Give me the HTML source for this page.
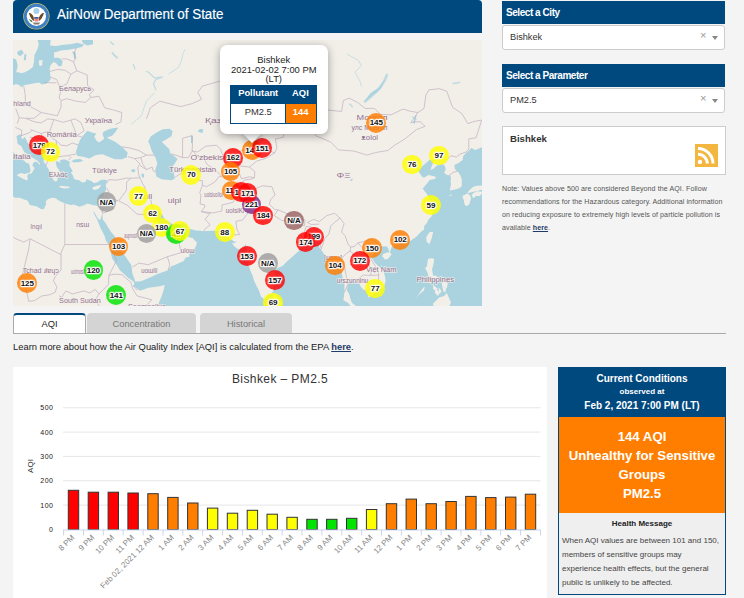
<!DOCTYPE html>
<html><head><meta charset="utf-8">
<style>
*{margin:0;padding:0;box-sizing:border-box}
html,body{width:744px;height:598px;overflow:hidden;background:#f4f4f4;font-family:"Liberation Sans",sans-serif;position:relative}
.abs{position:absolute}
#hdr{left:13px;top:0;width:469px;height:33px;background:#00497f;border-radius:4px 4px 0 0}
#hdr .t{position:absolute;left:44px;top:5.8px;color:#fff;font-size:14px;transform:scaleX(0.955);transform-origin:0 0;-webkit-text-stroke:0.15px #fff}
#map{left:13px;top:40px;width:469px;height:266px;background:#f2efe9;overflow:hidden}
.sh{left:502px;width:223px;height:23px;background:#00497f;color:#fff;font-size:10px;font-weight:bold;padding:6px 0 0 4px;letter-spacing:-0.45px}
.sel{left:502px;width:223px;height:25px;background:#fff;border:1px solid #ccc;border-radius:3px;font-size:9.2px;color:#333;padding:6px 0 0 7px}
.sel .x{position:absolute;left:197px;top:3px;color:#999;font-size:11px}
.sel .ar{position:absolute;left:209px;top:10px;width:0;height:0;border-left:3.5px solid transparent;border-right:3.5px solid transparent;border-top:4px solid #888}
#city{left:502px;top:126px;width:224px;height:49px;background:#fff;border:1px solid #ccc}
#note{left:502px;top:183px;width:224px;font-size:7.1px;line-height:13px;color:#555;letter-spacing:0.08px}
.tab{top:313px;height:20px;font-size:9.3px;color:#777;text-align:center;padding-top:6px;background:#d4d4d4;border-radius:4px 4px 0 0}
#tabline{left:13px;top:333px;width:713px;height:1px;background:#aaa}
#learn{left:13px;top:341px;font-size:9.4px;color:#222}
#chart{left:13px;top:367px;width:534px;height:231px;background:#fff}
#cc{left:558px;top:367px;width:168px;height:228px;border:1px solid #00497f;background:#efefef}
#cch{left:0;top:0;width:166px;height:49px;background:#00497f;color:#fff;text-align:center;font-weight:bold}
#cco{left:0;top:49px;width:166px;height:96px;background:#ff7e00;color:#fff;text-align:center;font-weight:bold;font-size:13.2px;line-height:19px;padding-top:10px}
#hm{left:0;top:151px;width:166px;text-align:center;font-weight:bold;font-size:8px;color:#222}
#hmt{left:3px;top:166px;width:160px;font-size:8px;line-height:14px;color:#444}
svg text{font-family:"Liberation Sans",sans-serif}
.yl{font-size:7px;fill:#222;letter-spacing:0.5px}
.xl{font-size:8px;fill:#888}
.al{font-size:8px;fill:#333}
.ct{font-size:12px;fill:#333}
.mk{position:absolute;width:19.8px;height:19.8px;border-radius:50%;text-align:center}
.mk i{font-style:normal;display:inline-block;text-shadow:1px 0 1px #fff,-1px 0 1px #fff,0 1px 1px #fff,0 -1px 1px #fff,1px 1px 1px #fff,-1px -1px 1px #fff,1px -1px 1px #fff,-1px 1px 1px #fff,0 0 3px #fff;padding:0 0.5px;line-height:8.5px}
.mk span{position:absolute;left:0;right:0;top:5.5px;font-size:8px;font-weight:bold;color:#111;line-height:9px;letter-spacing:-0.1px}
#pop{left:207px;top:5px;width:107.5px;height:89px;background:#fff;border-radius:7px;box-shadow:0 2px 8px rgba(0,0,0,0.35)}
#tip{left:232px;top:86px;width:14px;height:14px;background:#fff;transform:rotate(45deg);box-shadow:2px 2px 6px rgba(0,0,0,0.25)}
#pt{left:0;top:10px;width:107.5px;text-align:center;font-size:9.4px;line-height:9.7px;color:#222}
#ptab{left:10.2px;top:40px;width:87px;height:38.7px;border:1px solid #00497f;background:#fff}

</style></head><body>
<div id="hdr" class="abs"><svg class="abs" style="left:10px;top:2px" width="28" height="28" viewBox="0 0 28 28">
<circle cx="13.4" cy="14.3" r="13.2" fill="#c9c46a"/>
<circle cx="13.4" cy="14.3" r="12.5" fill="#3f7fc4"/>
<circle cx="13.4" cy="14.3" r="9.6" fill="#fff"/>
<circle cx="13.4" cy="9" r="3" fill="#a9d1e6"/>
<path d="M5.8,11 C7.5,10.5 9.5,12 10.8,15.5 L11,19 C9,18 7,15 5.8,11Z" fill="#6b4a22"/>
<path d="M21,11 C19.3,10.5 17.3,12 16,15.5 L15.8,19 C17.8,18 19.8,15 21,11Z" fill="#6b4a22"/>
<rect x="11.3" y="15" width="4.2" height="4.6" rx="1" fill="#e9828a"/>
<rect x="11.3" y="15" width="4.2" height="1.6" fill="#3a5fa8"/>
<path d="M6,17 C6.5,19 8,20 9.5,20.5 L9,18.5Z" fill="#3f8a4a"/>
<path d="M10,20.5 L17,20.5 L16,22.5 L11,22.5Z" fill="#8a7c6a"/>
</svg><div class="t">AirNow Department of State</div></div>
<div id="map" class="abs"><svg width="469" height="266" style="position:absolute;left:0;top:0">
<g fill="#aad3df"><path d="M59.0,11.7L62.4,11.7L63.2,18.2L61.3,18.9L60.5,14.6Z"/><path d="M3.5,96.2L4.3,101.0L4.6,103.7L8.4,106.3L11.1,112.0L14.5,114.6L18.3,114.6L17.2,116.6L21.0,118.6L24.8,121.1L27.1,123.6L26.7,125.1L24.8,122.6L22.1,121.6L19.8,123.6L19.5,126.1L21.7,128.1L19.8,131.5L17.6,133.9L16.0,133.9L16.4,132.7L17.6,130.5L16.8,126.6L16.0,123.6L13.4,123.1L11.5,121.1L10.0,120.1L8.4,117.9L4.6,116.6L3.1,115.1L0.1,112.0L-5.2,111.5L-5.2,143.4L-1.1,141.1L-3.3,143.4L-1.1,147.2L-2.6,150.4L-3.7,154.1L-1.1,155.9L2.4,157.7L6.9,157.7L11.1,159.5L14.5,160.4L16.8,164.9L23.3,166.2L27.8,168.9L30.9,169.3L33.2,164.0L32.8,161.3L35.1,159.1L39.2,157.7L42.7,158.2L44.9,160.0L48.0,161.8L52.2,163.6L57.5,164.9L60.9,164.5L66.6,166.7L70.4,165.4L74.6,163.6L79.5,164.9L84.1,165.8L86.7,164.9L89.0,161.3L89.8,158.2L91.7,153.2L93.2,148.6L92.8,144.4L93.6,142.0L94.3,140.6L92.4,139.7L88.3,139.7L84.1,142.5L80.7,143.0L78.4,141.1L73.4,139.2L72.7,142.0L69.3,142.5L65.8,140.1L63.9,140.1L60.9,138.7L60.1,135.8L57.9,132.5L59.8,131.5L58.6,129.1L56.7,126.6L56.3,124.1L57.1,122.6L55.6,121.1L51.8,119.6L49.5,119.6L46.8,120.6L47.6,123.1L43.8,121.1L42.7,122.6L43.8,127.1L45.3,129.1L48.0,133.0L46.8,134.4L44.2,134.4L44.9,136.8L44.2,141.1L42.3,141.6L40.0,139.7L38.9,135.8L38.1,133.9L39.6,132.5L36.6,131.5L35.4,129.1L33.5,126.1L32.4,124.1L30.5,122.1L30.9,117.6L30.9,115.1L28.6,113.0L27.1,111.5L24.8,109.9L22.1,107.9L19.1,106.3L17.2,105.2L14.5,102.6L13.0,98.9L11.5,96.7L9.6,99.4L8.1,97.3L9.2,95.1L6.2,94.6Z"/><path d="M58.2,121.6L61.3,119.6L67.0,119.1L70.4,120.6L67.0,122.1L61.3,122.6Z"/><path d="M80.5,170.9L80.7,172.9L82.2,175.9L84.5,180.2L85.6,183.2L87.1,187.0L91.7,196.3L92.8,200.4L97.0,206.6L98.1,214.3L99.3,218.7L103.5,224.7L106.9,230.3L110.7,233.8L115.3,238.1L119.1,240.5L121.3,242.4L121.0,244.7L119.4,246.3L122.1,247.1L125.9,250.2L127.8,250.5L135.4,247.8L141.1,247.1L146.8,246.3L151.7,244.9L150.6,250.2L148.7,255.9L146.8,260.6L144.1,267.5L143.0,290.3L336.9,290.3L337.2,265.5L335.3,262.9L330.4,260.2L331.5,252.1L331.5,244.3L330.0,238.5L328.5,232.6L327.7,226.7L325.4,225.1L322.4,226.7L319.7,229.5L317.8,229.5L315.2,228.7L315.6,222.7L315.2,218.3L312.9,215.9L310.2,212.7L308.0,209.8L306.4,207.8L305.7,203.3L304.5,202.1L301.1,202.5L298.8,204.5L295.0,205.4L291.2,205.8L287.4,206.6L285.9,211.1L282.9,213.5L276.8,219.1L273.4,221.9L269.6,225.9L264.6,227.9L261.6,230.3L261.6,234.6L262.0,240.1L260.4,246.3L260.1,250.9L258.2,254.8L254.7,254.8L253.6,256.7L251.3,259.4L247.9,256.3L246.8,252.9L245.6,249.8L243.7,246.3L241.1,240.8L239.2,234.6L237.3,230.6L236.1,226.7L235.0,222.7L233.5,216.7L233.8,211.5L233.5,207.8L232.7,203.7L230.8,207.4L226.6,209.8L224.0,208.6L221.3,206.2L219.0,203.3L218.6,203.3L221.3,202.9L224.3,200.8L222.8,202.5L217.9,199.2L216.0,197.9L213.3,196.3L211.4,192.9L210.3,190.4L203.8,190.8L198.1,190.8L190.9,191.3L187.1,190.8L182.9,190.4L179.1,189.6L174.5,188.7L173.4,184.5L170.7,182.8L165.8,184.9L162.0,185.3L158.2,183.6L154.4,181.1L151.7,179.4L149.8,175.5L147.6,172.9L145.3,170.7L143.0,169.3L141.1,170.7L139.2,171.1L139.2,175.0L141.1,178.1L143.0,181.5L145.3,184.1L147.2,187.0L148.7,190.0L149.7,192.9L149.8,190.0L151.4,187.5L152.5,187.5L152.9,190.8L151.7,193.8L152.9,195.0L154.4,196.3L160.1,195.9L163.5,194.2L167.3,190.8L169.6,188.7L170.0,187.5L171.1,186.2L170.7,189.6L171.1,192.9L175.3,197.1L179.5,197.9L181.8,200.4L184.0,202.5L182.9,206.6L179.5,211.1L176.4,211.5L176.4,216.7L172.6,217.5L170.7,221.1L166.9,222.7L162.4,224.7L158.2,226.3L155.2,230.3L148.7,232.6L143.4,234.6L139.2,236.5L133.5,238.9L127.8,241.2L125.9,241.6L122.1,241.6L121.3,238.5L119.4,233.4L118.7,227.9L118.3,225.1L114.5,219.5L110.7,213.9L108.0,210.2L105.7,206.6L104.2,202.1L101.6,195.9L98.1,192.1L95.5,187.9L92.4,182.8L89.8,179.4L89.4,172.9L88.3,176.8L87.1,180.2L84.5,178.1L81.8,172.9Z"/><path d="M342.6,290.3L342.6,265.5L339.1,262.9L338.0,260.6L337.2,257.9L336.5,254.8L333.8,250.2L334.9,245.1L336.5,241.6L336.9,239.3L338.8,238.5L340.3,238.9L340.3,241.6L343.7,242.0L346.4,244.3L348.3,247.5L350.5,249.8L353.6,250.5L355.1,254.0L355.1,257.5L357.8,255.9L360.8,254.0L363.8,250.9L367.3,249.0L370.7,247.1L371.8,244.3L372.6,240.8L372.2,237.3L370.7,231.8L368.4,228.7L365.4,226.3L361.9,222.7L359.7,219.5L358.5,217.9L358.9,215.5L360.8,212.7L362.3,209.4L365.4,206.6L368.0,206.2L371.1,206.6L373.7,206.2L375.6,209.0L376.0,211.9L377.1,211.5L378.7,207.0L382.5,205.4L386.3,204.5L388.5,202.5L390.8,203.3L393.9,201.7L397.7,200.8L400.3,198.8L403.4,196.7L405.6,194.2L407.9,192.1L411.0,189.6L411.3,185.8L413.6,183.6L415.5,179.4L418.6,176.3L420.1,171.5L416.7,168.5L420.1,166.7L420.1,164.5L417.8,161.8L416.3,159.1L414.0,154.1L411.0,150.4L409.8,148.6L414.0,143.4L416.7,140.1L422.4,138.7L422.8,136.8L418.6,135.8L415.5,134.9L411.0,137.8L408.7,136.3L407.2,133.9L404.1,129.1L407.2,128.1L411.3,124.6L414.8,121.6L416.7,119.6L421.2,120.6L418.6,126.6L417.4,130.0L420.1,129.1L423.9,125.6L429.6,124.1L431.9,126.1L432.6,129.6L431.1,133.0L434.2,134.9L437.2,135.4L438.0,137.8L437.6,141.1L438.0,144.4L437.2,148.1L436.8,150.4L439.5,150.0L442.1,149.5L445.6,148.6L447.5,147.6L449.0,145.3L448.6,142.5L449.0,139.7L447.5,135.8L445.2,132.0L441.8,129.1L441.4,125.1L445.6,123.1L449.7,120.1L450.1,116.1L453.5,112.5L455.4,111.0L458.5,107.9L462.3,109.9L469.1,107.3L488.9,107.3L488.9,290.3Z"/><path d="M350.9,61.2L354.0,59.9L359.3,55.0L363.5,52.5L368.0,48.7L371.1,42.2L373.0,35.6L374.5,33.6L373.3,33.6L371.8,38.9L369.5,43.5L365.7,48.0L361.2,50.6L357.0,53.7L352.8,59.3Z"/><path d="M235.7,91.8L237.6,88.5L241.1,87.9L244.1,89.6L250.2,90.2L257.8,89.6L257.0,92.4L249.4,91.8L244.1,91.3L239.9,90.7L238.0,92.9Z"/><path d="M246.4,111.5L249.4,110.5L255.1,111.0L254.4,113.0L249.4,112.5Z"/><path d="M184.8,91.8L186.7,89.1L190.5,89.6L189.4,92.9Z"/><path d="M178.0,95.6L179.9,96.2L179.5,102.6L178.0,103.7Z"/><path d="M117.5,131.0L119.8,129.1L122.5,130.0L121.3,132.5Z"/><path d="M128.2,133.4L131.2,133.9L130.8,137.8L128.9,137.3Z"/><path d="M350.2,239.3L354.0,241.6L352.1,243.2L349.4,240.8Z"/><path d="M336.9,140.6L339.1,138.2L339.9,140.1L337.6,141.1Z"/><path d="M401.5,84.6L403.7,74.9L402.6,74.9L400.3,82.3Z"/></g>
<g fill="#aad3df"><path d="M74.5,90.8L78.7,92.5L83.3,93.4L81.2,96.7L83.7,100.9L86.2,102.5L91.2,98.8L90.8,97.5L89.6,94.2L90.4,91.7L95.4,89.6L99.6,88.3L105.4,87.5L102.1,92.5L98.8,95.9L93.7,97.5L95.4,98.4L102.1,101.7L108.8,106.7L114.6,112.6L113.8,117.6L108.8,119.3L102.1,119.3L95.4,116.7L89.6,114.2L82.9,115.1L76.2,118.4L70.4,116.7L64.5,115.9L62.8,112.6L65.3,104.2L67.0,100.0L71.2,94.2Z"/><path d="M135.2,101.2L137.9,96.3L144.4,92.0L149.8,89.2L156.3,88.7L159.6,90.9L158.5,96.3L150.9,100.7L148.7,101.7L152.0,105.0L156.3,109.3L157.4,113.7L159.6,114.8L164.5,119.1L161.8,123.5L158.5,127.8L160.7,132.2L161.8,138.7L158.5,140.3L148.7,139.2L143.3,136.5L142.2,130.0L144.4,123.5L142.2,117.0L139.0,111.5L136.8,105.0Z"/><path d="M24.2,0.0L37.6,0.0L37.1,5.4L43.0,5.9L50.5,4.8L57.0,4.3L64.5,2.7L71.0,4.8L68.8,7.0L62.4,8.6L55.9,9.7L49.5,10.2L45.2,11.3L42.5,14.0L40.9,17.7L44.1,17.2L47.8,18.8L49.7,21.5L48.4,26.3L45.7,26.3L43.0,23.1L40.3,22.0L37.6,25.3L36.6,29.0L37.1,33.3L37.6,39.8L33.3,43.5L29.0,44.6L25.8,42.5L10.8,45.2L8.6,47.3L6.5,45.2L3.2,44.1L0.0,45.2L-2.2,45.2L-2.2,18.3L0.0,18.3L3.2,19.4L4.8,25.8L3.2,32.3L5.4,32.3L8.6,33.3L11.8,32.3L16.1,30.1L19.9,26.9L21.0,21.5L21.5,15.1L24.7,8.6L25.8,4.3L24.2,-2.2Z"/><path d="M4.3,11.8L8.6,9.7L10.8,12.9L7.5,16.1L4.8,15.1Z"/><path d="M11.3,14.5L13.4,14.0L12.9,20.4L10.8,19.9Z"/><path d="M68.8,0.0L80.0,0.0L80.0,4.3L74.2,5.4L69.9,3.2Z"/></g>
<g fill="#f2efe9"><path d="M3.9,134.9L7.7,133.0L11.9,133.9L16.0,132.5L14.1,136.3L14.9,138.7L14.1,140.4L11.1,139.2L8.1,137.8L4.6,135.8Z"/><path d="M46.1,146.7L48.0,145.8L51.8,146.3L56.7,146.7L56.3,148.1L51.0,148.6L46.5,147.2Z"/><path d="M79.5,149.0L81.8,150.0L86.0,148.6L88.3,144.8L82.2,146.3L79.5,147.6Z"/><path d="M416.7,192.1L420.1,192.1L418.6,198.4L416.3,204.5L413.6,201.2L413.3,197.1L415.5,193.8Z"/><path d="M369.5,216.3L371.8,219.5L374.9,219.1L378.7,214.3L376.8,212.3L373.0,212.7L369.9,214.3Z"/><path d="M415.2,218.7L418.6,218.3L421.2,218.7L420.5,223.9L419.0,229.5L420.1,235.8L423.1,235.8L428.1,240.5L428.8,242.0L425.4,240.5L422.4,238.9L418.6,237.3L415.2,235.8L414.8,233.0L412.1,227.9L414.0,226.3L414.4,222.3Z"/><path d="M414.0,238.5L419.0,240.5L417.8,243.6L414.8,242.0Z"/><path d="M402.2,258.3L404.5,255.9L411.0,250.2L411.7,246.7L410.2,247.8L405.3,254.8Z"/><path d="M420.1,244.7L425.0,249.0L422.0,250.5L420.1,249.0Z"/><path d="M422.0,248.2L426.6,252.1L425.0,255.9L422.0,252.9Z"/><path d="M425.4,247.1L428.5,250.9L426.6,254.4L425.8,250.2Z"/><path d="M428.8,242.0L434.9,242.8L433.8,248.2L431.5,247.5L429.2,245.9Z"/><path d="M429.2,245.9L433.0,248.2L432.6,252.5L430.4,251.3Z"/><path d="M420.1,263.6L426.2,257.5L431.1,255.9L433.8,252.9L438.0,262.5L435.7,267.5L420.5,267.5Z"/><path d="M449.4,155.9L452.4,154.6L454.3,153.2L457.0,155.5L458.1,158.2L456.2,164.5L453.5,166.2L451.6,164.5L450.9,160.4L450.1,158.6Z"/><path d="M454.3,152.7L456.6,150.0L460.4,146.7L464.2,145.8L469.9,145.3L469.9,149.5L464.2,150.9L460.4,151.8L455.4,153.0Z"/><path d="M458.5,155.0L460.8,152.7L464.2,151.3L469.9,151.8L468.7,153.6L466.8,155.9L463.0,155.9L460.4,158.2Z"/><path d="M260.4,252.9L262.0,254.0L265.4,257.9L268.1,262.5L268.4,267.5L260.1,267.5L260.1,261.7L260.1,257.9Z"/><path d="M436.4,155.9L439.1,155.5L438.7,154.8L436.8,155.0Z"/><path d="M25.8,20.4L29.6,19.9L29.0,25.8L26.3,25.8Z"/><path d="M40.9,12.4L44.6,11.8L45.2,17.2L41.4,17.7Z"/></g>
<g fill="none" stroke="#aad3df" stroke-linecap="round" stroke-linejoin="round" opacity="0.7"><path stroke-width="1.2" d="M133.2,31.5L135.6,32.3L141.3,37.9L149.4,37.1L142.9,39.5L140.5,43.5L142.9,50.0"/><path stroke-width="0.8" d="M141.3,53.2L133.2,61.3L128.4,75.8L118.7,83.9"/><path stroke-width="0.8" d="M155.8,33.9L165.5,27.4L167.9,21.8L170.3,12.9L171.9,9.7"/><path stroke-width="1.8" d="M99.4,12.9L101.0,15.0L104.2,17.7"/><path stroke-width="1.2" d="M120.3,24.2L122.0,29.0"/><path stroke-width="1.6" d="M97.7,2.0L100.5,4.5"/><path stroke-width="0.8" d="M334.2,14.3L345.7,20.6L348.3,25.8L341.9,32.1L347.0,41.1L348.3,46.2"/><path stroke-width="1.5" d="M336.8,64.0L339.3,66.6"/><path stroke-width="1.5" d="M440.2,43.6L446.6,42.4"/><path stroke-width="1.2" d="M399.4,76.8L403.2,79.4"/><path stroke-width="2.6" d="M352.1,61.5L358.0,56.5L363.6,51.3L368.0,46.0L371.3,41.1L373.8,35.5"/></g>
<g fill="none" stroke="#b9a3b9" stroke-width="0.8" stroke-linejoin="round" opacity="0.75"><path d="M133.5,78.9L137.3,67.8L146.8,61.2L167.7,66.6L179.1,63.6L188.6,59.3L184.8,52.5L189.4,46.1L205.7,41.5L219.0,36.9L236.1,45.5L247.5,45.5L253.2,55.0L260.8,64.2L272.2,64.8L281.7,72.5L288.6,75.4"/><path d="M158.2,113.6L169.6,117.6L169.6,98.3L179.1,95.6L179.5,103.7L179.1,111.0L184.8,112.0L192.4,106.3L203.4,105.2L207.6,109.4L209.5,114.6L215.2,120.1L219.0,117.1L224.7,112.5L230.0,109.9L236.1,111.5L239.9,107.9L245.6,108.9L255.1,109.9L261.6,113.0L263.9,107.9L262.4,98.9L270.3,97.3L272.2,86.3L281.7,87.4L283.6,78.9L288.6,75.4"/><path d="M169.6,117.6L175.3,117.6L179.5,110.5L184.8,116.6L190.5,118.1L194.3,124.6L201.9,129.6L209.5,136.8"/><path d="M162.0,137.3L166.9,133.9L174.2,133.0L181.0,136.3L186.7,140.6L189.4,140.6L189.4,145.3L186.7,152.7L187.9,155.0L187.1,164.0L191.7,164.9L191.7,167.1L188.2,171.5L194.3,173.3L197.4,172.9L192.0,179.4L195.5,182.8L197.0,184.9L191.7,189.2L190.9,191.3"/><path d="M189.4,145.3L193.6,146.7L201.9,142.0L206.1,136.3L214.5,137.8L217.1,137.8L222.8,135.8L226.6,133.9L228.5,138.7L236.5,136.8L241.4,137.8"/><path d="M188.2,171.5L200.0,172.9L208.8,171.1L209.1,164.9L215.2,163.6L220.2,162.2L224.0,155.9L222.4,152.7L227.4,150.9L228.5,146.7L227.4,143.4L232.3,139.7L238.0,139.2L241.4,137.8"/><path d="M214.5,137.8L216.7,133.0L213.3,128.1L217.1,126.6L222.8,123.1L224.7,119.1"/><path d="M220.9,126.1L228.5,126.1L236.5,127.1L241.8,131.5L241.4,137.8"/><path d="M236.5,127.1L243.7,121.1L248.7,119.6L253.2,118.1L261.6,113.0"/><path d="M216.0,197.9L218.3,195.0L226.6,194.6L224.0,189.2L222.8,181.5L230.0,179.8L236.1,171.1L239.9,165.8L241.8,159.5L239.9,158.2L237.3,151.8L243.7,148.1L249.4,145.8L258.9,146.7L262.0,155.0L257.8,159.5L256.3,164.0L262.0,169.8L265.0,169.8"/><path d="M261.2,175.5L265.0,169.8L272.2,172.9L279.8,176.3L285.5,179.4L292.0,179.8L291.6,185.8L283.6,185.3L276.0,181.9L268.4,180.2L261.2,175.5"/><path d="M294.3,182.4L300.7,179.4L306.4,181.5L314.0,175.5L321.6,173.3L327.0,178.1"/><path d="M294.3,182.4L298.1,184.5L306.4,184.1"/><path d="M291.6,204.5L293.9,195.0L291.2,192.1L293.1,186.6L298.1,187.0L306.4,192.1L307.2,196.3L305.7,200.4L308.3,208.6L307.6,209.8"/><path d="M308.3,208.6L311.8,198.4L315.9,194.2L317.8,185.8L321.6,182.4L327.0,178.1"/><path d="M327.0,178.1L331.1,183.6L328.5,192.1L332.3,195.9L334.9,204.1L337.6,207.0L341.4,206.6L344.8,202.9L350.2,201.7L357.0,199.2L362.3,201.2L367.3,206.6"/><path d="M337.6,207.0L337.2,211.1L332.7,213.9L328.5,218.7L331.5,227.1L333.0,234.6L334.9,244.3L331.5,252.1"/><path d="M337.2,211.1L341.4,214.7L340.7,220.7L346.7,221.1L354.7,223.1L358.1,229.5L357.8,235.4"/><path d="M344.8,202.9L350.2,208.6L354.0,213.1L357.8,219.1L362.7,226.7L365.4,232.6L365.7,235.0"/><path d="M346.4,244.3L346.0,238.5L350.2,235.0L357.8,235.4L365.7,235.0L365.4,243.2L359.7,248.2L354.0,250.5"/><path d="M290.5,74.9L302.6,95.6L317.8,102.1L325.4,109.9L340.7,111.0L354.0,115.1L362.7,112.5L374.9,110.5L381.7,105.2L392.0,98.9L403.4,89.6L412.1,86.3L407.2,81.8L401.5,81.8L397.7,82.9L404.9,72.5"/><path d="M290.5,74.9L298.8,68.4L308.3,66.0L315.9,70.2L328.5,71.4L330.4,60.5L336.1,58.1L344.5,62.4L352.1,68.4L361.6,68.4L367.3,74.3L377.9,74.9L390.1,69.0L397.7,71.4L404.9,72.5"/><path d="M404.9,72.5L411.0,68.4L412.9,55.0L415.9,49.9L426.2,48.7L433.8,51.2L439.5,67.2L449.0,73.7L454.7,83.5L462.3,81.2L468.7,80.1L463.0,97.8L455.8,98.9L455.8,108.9L453.2,112.0"/><path d="M453.2,112.0L447.1,114.1L443.3,117.1L438.0,115.6L431.9,121.6L429.6,124.1"/><path d="M436.1,135.4L439.9,132.5L444.8,131.0"/><path d="M62.4,-0.4L67.0,-5.8L70.8,-12.2"/><path d="M49.1,18.9L53.7,18.9L60.5,21.8L62.4,18.9L61.3,12.4L63.2,8.0"/><path d="M36.6,31.5L44.2,29.5L51.8,30.1L57.9,34.2"/><path d="M60.5,21.8L63.9,30.8L57.9,34.2L55.6,39.6L53.7,44.2L48.0,46.1L46.1,45.5"/><path d="M37.0,36.9L43.8,39.6L46.1,45.5"/><path d="M31.2,42.5L43.4,42.9"/><path d="M46.1,45.5L47.6,51.8L46.1,58.1L48.0,60.5L48.0,67.2L44.2,76.0L42.3,75.4"/><path d="M63.9,30.8L74.2,34.9L74.6,45.5L81.0,49.9L76.5,54.4L77.6,57.5"/><path d="M48.0,60.5L53.7,58.7L63.2,61.2L72.7,62.4L77.6,57.5L86.0,56.2L91.7,67.8L101.2,70.2L108.8,72.5L108.0,81.8L102.3,84.6"/><path d="M10.7,46.1L12.2,54.4L12.6,64.2L19.5,67.8L28.2,72.5L42.3,75.4"/><path d="M21.4,81.8L28.2,82.9L34.7,78.9L40.8,79.5"/><path d="M4.3,83.5L6.2,77.8L12.6,78.3L21.4,81.8"/><path d="M2.7,68.4L6.2,77.8"/><path d="M12.6,78.3L21.0,78.3L28.2,72.5"/><path d="M40.8,79.5L36.6,91.8L33.9,91.8"/><path d="M17.6,89.6L28.2,93.5L33.9,91.8"/><path d="M40.8,79.5L49.9,82.3L57.9,80.1L62.0,78.9L67.7,82.3L71.2,90.7L63.9,95.6L69.6,97.3"/><path d="M57.9,80.1L63.9,95.6"/><path d="M33.9,91.8L38.1,97.3L43.0,100.5L48.0,105.2L53.7,105.8L59.4,103.1L65.5,105.0"/><path d="M43.0,100.5L44.2,107.9L41.9,112.5L44.2,117.1L49.9,116.1L56.0,115.6L57.9,117.6L55.6,120.1"/><path d="M56.3,115.1L63.2,114.1"/><path d="M32.8,125.6L35.4,119.6L40.4,118.1L44.2,117.1"/><path d="M30.5,114.6L33.2,111.0L35.1,114.6L35.4,119.6"/><path d="M16.8,97.3L23.3,97.8L29.0,98.9L30.9,106.3L27.1,111.5"/><path d="M19.5,106.3L23.6,109.4L27.1,111.5"/><path d="M28.2,93.5L29.0,98.9"/><path d="M33.2,111.0L38.5,112.5L41.9,112.5"/><path d="M8.4,95.6L16.0,92.9L19.5,90.2"/><path d="M2.4,87.4L8.8,90.2L8.4,95.6"/><path d="M114.9,116.6L121.7,118.6L127.0,124.1L124.8,127.1L125.5,133.9L127.0,137.8L117.9,138.2L112.6,138.2L104.2,140.1L95.9,139.7L93.6,143.4"/><path d="M108.8,106.8L116.4,107.9L125.9,110.5L133.5,115.1L141.5,115.1"/><path d="M121.7,118.6L127.8,117.6L133.5,115.1"/><path d="M127.8,117.6L129.7,124.1L133.5,129.6L139.2,127.1L140.3,131.0L142.6,132.0"/><path d="M127.0,125.6L133.5,129.6"/><path d="M127.0,137.8L129.7,143.9L132.4,148.1L130.8,152.7L137.3,157.7L139.2,166.7L141.1,170.7"/><path d="M117.9,138.2L113.7,142.0L113.4,150.4L105.7,160.9L114.5,165.4L124.0,174.2L133.5,174.6L139.2,175.0"/><path d="M133.5,174.6L140.7,177.2"/><path d="M92.8,158.6L105.0,160.4"/><path d="M105.0,160.4L97.4,164.0L101.2,168.5L95.5,171.1L89.6,173.5"/><path d="M89.4,172.9L91.7,166.2L92.1,157.3L95.9,151.8L93.6,148.1"/><path d="M86.7,164.9L89.4,172.9"/><path d="M119.4,227.1L125.9,223.1L135.4,224.7L154.4,216.7L168.1,212.7L165.8,201.7L156.7,200.8L152.9,195.0"/><path d="M155.2,230.3L156.7,224.3L154.4,216.7"/><path d="M165.8,201.7L169.6,196.3L171.1,192.9"/><path d="M51.8,163.6L51.8,204.5L97.0,204.5"/><path d="M51.8,204.5L48.0,212.7L48.0,214.7L17.2,198.8L10.7,202.1L2.0,198.4L-5.2,192.1"/><path d="M48.0,214.7L48.0,229.9L42.3,236.5L40.4,240.8L43.8,246.7L42.3,252.1L36.6,254.8L29.0,255.9L21.4,260.6L15.7,261.3"/><path d="M15.7,261.3L13.8,252.5L11.9,242.4L8.4,237.7L10.0,232.6L15.7,209.0L17.2,198.8"/><path d="M46.1,255.9L48.7,257.1L52.9,250.9L59.4,254.0L70.8,250.9L76.9,252.9L82.2,249.4L86.0,254.0"/><path d="M97.0,204.5L103.5,220.7L95.9,235.4L95.5,244.3L89.8,250.2L86.0,254.0"/><path d="M95.5,235.4L101.2,234.2L108.8,234.6L117.9,242.4"/><path d="M117.9,242.4L119.4,248.2L124.0,255.9L138.8,259.8L127.8,271.3"/><path d="M86.0,254.0L82.2,259.8L89.8,271.3"/><path d="M121.0,246.3L124.0,250.2"/></g>
<g font-family="Liberation Sans" font-size="7.4" fill="#927292" text-anchor="middle" stroke="#f2efe9" stroke-width="1.5" paint-order="stroke" stroke-opacity="0.8"><text x="62.1" y="51.1" textLength="32" lengthAdjust="spacingAndGlyphs">Беларусь</text><text x="85.5" y="82.9" textLength="27.4" lengthAdjust="spacingAndGlyphs">Україна</text><text x="9.1" y="66.4" textLength="17.5" lengthAdjust="spacingAndGlyphs">hland</text><text x="48.7" y="97.2" textLength="30" lengthAdjust="spacingAndGlyphs">România</text><text x="8.9" y="118.5" textLength="17.7" lengthAdjust="spacingAndGlyphs">Italia</text><text x="45.2" y="136.6" textLength="19" lengthAdjust="spacingAndGlyphs">Ελλάς</text><text x="91.5" y="132.5" textLength="25" lengthAdjust="spacingAndGlyphs">Türkiye</text><text x="200.0" y="120.4" textLength="45" lengthAdjust="spacingAndGlyphs">O'zbekiston</text><text x="179.7" y="132.2" textLength="47" lengthAdjust="spacingAndGlyphs">Türkmenistan</text><text x="200.6" y="157.2" textLength="18.5" lengthAdjust="spacingAndGlyphs">uolsiuollol</text><text x="161.5" y="163.2" textLength="13.7" lengthAdjust="spacingAndGlyphs">ulpl</text><text x="222.0" y="172.5" textLength="18.5" lengthAdjust="spacingAndGlyphs">uolsiKl</text><text x="131.3" y="158.5" textLength="16" lengthAdjust="spacingAndGlyphs">uloll</text><text x="117.7" y="198.1" textLength="13" lengthAdjust="spacingAndGlyphs">aupnosll</text><text x="69.8" y="187.0" textLength="13" lengthAdjust="spacingAndGlyphs">nsɯ</text><text x="23.3" y="188.6" textLength="11.4" lengthAdjust="spacingAndGlyphs">lnqıl</text><text x="27.7" y="233.1" textLength="36" lengthAdjust="spacingAndGlyphs">Tchad ɹlɐɥɔ</text><text x="65.0" y="234.3" textLength="14" lengthAdjust="spacingAndGlyphs">uolnosll</text><text x="67.0" y="262.8" textLength="41.8" lengthAdjust="spacingAndGlyphs">South Sudan</text><text x="174.6" y="213.2" textLength="13.7" lengthAdjust="spacingAndGlyphs">uloɯ</text><text x="136.3" y="232.9" textLength="16" lengthAdjust="spacingAndGlyphs">uoɯlll</text><text x="359.0" y="80.3" textLength="31" lengthAdjust="spacingAndGlyphs">Монгол</text><text x="356.6" y="90.3" textLength="36" lengthAdjust="spacingAndGlyphs">улс Монгол</text><text x="356.5" y="100.4" textLength="17" lengthAdjust="spacingAndGlyphs">ᴥolol</text><text x="330.5" y="138.2" textLength="14" lengthAdjust="spacingAndGlyphs">ΦΞ</text><text x="368.2" y="231.6" textLength="30.3" lengthAdjust="spacingAndGlyphs">Việt Nam</text><text x="339.6" y="243.3" textLength="31.5" lengthAdjust="spacingAndGlyphs">urszunnlnu</text><text x="422.3" y="242.0" textLength="37.6" lengthAdjust="spacingAndGlyphs">Philippines</text><text x="320.0" y="219.7" textLength="18" lengthAdjust="spacingAndGlyphs">[ɯɐuɯ]</text><text x="203.0" y="82.9" textLength="22" lengthAdjust="spacingAndGlyphs">Қаза</text><text x="134.0" y="269.2" textLength="38" lengthAdjust="spacingAndGlyphs">Soomaaliya</text></g>
</svg><div class="mk" style="left:16.3px;top:95.0px;background:rgba(255,0,0,0.82)"><span><i>179</i></span></div>
<div class="mk" style="left:27.5px;top:101.9px;background:rgba(255,255,0,0.82)"><span><i>72</i></span></div>
<div class="mk" style="left:168.4px;top:124.9px;background:rgba(255,255,0,0.82)"><span><i>70</i></span></div>
<div class="mk" style="left:229.0px;top:100.3px;background:rgba(255,126,0,0.82)"><span><i>144</i></span></div>
<div class="mk" style="left:239.2px;top:98.1px;background:rgba(255,0,0,0.82)"><span><i>151</i></span></div>
<div class="mk" style="left:210.1px;top:107.8px;background:rgba(255,0,0,0.82)"><span><i>162</i></span></div>
<div class="mk" style="left:207.7px;top:121.7px;background:rgba(255,126,0,0.82)"><span><i>105</i></span></div>
<div class="mk" style="left:208.6px;top:140.6px;background:rgba(255,126,0,0.82)"><span><i>111</i></span></div>
<div class="mk" style="left:218.1px;top:142.1px;background:rgba(255,0,0,0.82)"><span><i>171</i></span></div>
<div class="mk" style="left:228.7px;top:154.6px;background:rgba(127,42,130,0.82)"><span><i>221</i></span></div>
<div class="mk" style="left:224.7px;top:143.3px;background:rgba(255,0,0,0.82)"><span><i>171</i></span></div>
<div class="mk" style="left:240.3px;top:165.6px;background:rgba(255,0,0,0.82)"><span><i>184</i></span></div>
<div class="mk" style="left:353.4px;top:72.9px;background:rgba(255,126,0,0.82)"><span><i>145</i></span></div>
<div class="mk" style="left:389.2px;top:114.5px;background:rgba(255,255,0,0.82)"><span><i>76</i></span></div>
<div class="mk" style="left:416.0px;top:105.6px;background:rgba(255,255,0,0.82)"><span><i>97</i></span></div>
<div class="mk" style="left:408.0px;top:155.2px;background:rgba(255,255,0,0.82)"><span><i>59</i></span></div>
<div class="mk" style="left:83.7px;top:152.4px;background:rgba(158,158,158,0.82)"><span><i>N/A</i></span></div>
<div class="mk" style="left:115.5px;top:146.4px;background:rgba(255,255,0,0.82)"><span><i>77</i></span></div>
<div class="mk" style="left:129.7px;top:163.6px;background:rgba(255,255,0,0.82)"><span><i>62</i></span></div>
<div class="mk" style="left:138.6px;top:177.5px;background:rgba(255,255,0,0.82)"><span><i>180</i></span></div>
<div class="mk" style="left:123.6px;top:183.5px;background:rgba(158,158,158,0.82)"><span><i>N/A</i></span></div>
<div class="mk" style="left:153.1px;top:184.3px;background:rgba(0,228,0,0.82)"><span><i>49</i></span></div>
<div class="mk" style="left:157.1px;top:181.1px;background:rgba(255,255,0,0.82)"><span><i>67</i></span></div>
<div class="mk" style="left:95.7px;top:196.5px;background:rgba(255,126,0,0.82)"><span><i>103</i></span></div>
<div class="mk" style="left:201.8px;top:182.3px;background:rgba(255,255,0,0.82)"><span><i>88</i></span></div>
<div class="mk" style="left:271.0px;top:170.5px;background:rgba(154,100,100,0.82)"><span><i>N/A</i></span></div>
<div class="mk" style="left:290.8px;top:186.8px;background:rgba(255,0,0,0.82)"><span><i>199</i></span></div>
<div class="mk" style="left:282.7px;top:192.2px;background:rgba(255,0,0,0.82)"><span><i>174</i></span></div>
<div class="mk" style="left:223.9px;top:206.4px;background:rgba(255,0,0,0.82)"><span><i>153</i></span></div>
<div class="mk" style="left:244.8px;top:213.3px;background:rgba(158,158,158,0.82)"><span><i>N/A</i></span></div>
<div class="mk" style="left:252.0px;top:230.0px;background:rgba(255,0,0,0.82)"><span><i>157</i></span></div>
<div class="mk" style="left:250.1px;top:252.5px;background:rgba(255,255,0,0.82)"><span><i>69</i></span></div>
<div class="mk" style="left:377.3px;top:189.9px;background:rgba(255,126,0,0.82)"><span><i>102</i></span></div>
<div class="mk" style="left:349.1px;top:198.2px;background:rgba(255,126,0,0.82)"><span><i>150</i></span></div>
<div class="mk" style="left:336.8px;top:210.9px;background:rgba(255,0,0,0.82)"><span><i>172</i></span></div>
<div class="mk" style="left:312.1px;top:215.5px;background:rgba(255,126,0,0.82)"><span><i>104</i></span></div>
<div class="mk" style="left:352.3px;top:238.6px;background:rgba(255,255,0,0.82)"><span><i>77</i></span></div>
<div class="mk" style="left:70.5px;top:220.2px;background:rgba(0,228,0,0.82)"><span><i>120</i></span></div>
<div class="mk" style="left:4.4px;top:233.4px;background:rgba(255,126,0,0.82)"><span><i>125</i></span></div>
<div class="mk" style="left:93.4px;top:245.4px;background:rgba(0,228,0,0.82)"><span><i>141</i></span></div>
<div id="tip" class="abs"></div>
<div id="pop" class="abs"><div id="pt" class="abs">Bishkek<br>2021-02-02 7:00 PM<br>(LT)</div>
<div id="ptab" class="abs">
<div class="abs" style="left:0;top:0;width:85px;height:18px;background:#00497f"></div>
<div class="abs" style="left:0;top:1.2px;width:54px;text-align:center;color:#fff;font-weight:bold;font-size:9.4px">Pollutant</div>
<div class="abs" style="left:53.5px;top:1.2px;width:31.5px;text-align:center;color:#fff;font-weight:bold;font-size:9.4px">AQI</div>
<div class="abs" style="left:53.5px;top:18px;width:31.5px;height:18.7px;background:#ff7e00;border-left:1px solid #00497f"></div>
<div class="abs" style="left:0;top:20.2px;width:54px;text-align:center;color:#333;font-size:9.4px">PM2.5</div>
<div class="abs" style="left:54px;top:20.2px;width:31px;text-align:center;color:#fff;font-weight:bold;font-size:9.4px">144</div>
</div></div>
</div>

<div class="abs sh" style="top:1px">Select a City</div>
<div class="abs sel" style="top:25px">Bishkek<span class="x">×</span><span class="ar"></span></div>
<div class="abs sh" style="top:64px">Select a Parameter</div>
<div class="abs sel" style="top:88px">PM2.5<span class="x">×</span><span class="ar"></span></div>
<div id="city" class="abs"><div class="abs" style="left:7px;top:6px;font-size:9.6px;font-weight:bold;color:#333">Bishkek</div>
<svg class="abs" style="left:192px;top:17px" width="23" height="23" viewBox="0 0 23 23"><rect width="23" height="23" fill="#f3b63f"/><circle cx="4.9" cy="17.9" r="2.2" fill="#fff"/><path d="M3,10.3 A9.3,9.3 0 0 1 12.3,19.6" fill="none" stroke="#fff" stroke-width="3"/><path d="M3,4.6 A15,15 0 0 1 18,19.6" fill="none" stroke="#fff" stroke-width="3"/></svg></div>
<div id="note" class="abs">Note: Values above 500 are considered Beyond the AQI. Follow recommendations for the Hazardous category. Additional information on reducing exposure to extremely high levels of particle pollution is available <b><u style="color:#1f3b66">here</u></b>.</div>

<div class="abs tab" style="left:13px;width:73px;background:#fff;border:1px solid #aaa;border-top:2px solid #00497f;border-bottom:none;color:#222;padding-top:4px">AQI</div>
<div class="abs tab" style="left:87px;width:109px">Concentration</div>
<div class="abs tab" style="left:200px;width:92px">Historical</div>
<div id="tabline" class="abs"></div>
<div id="learn" class="abs">Learn more about how the Air Quality Index [AQI] is calculated from the EPA <b><u style="color:#1f3b66">here</u></b>.</div>
<div id="chart" class="abs"></div>
<div id="cc" class="abs">
 <div id="cch" class="abs"><div style="font-size:10px;padding-top:5px">Current Conditions</div><div style="font-size:8px;padding-top:3px;line-height:10px">observed at</div><div style="font-size:10px;padding-top:3px">Feb 2, 2021 7:00 PM (LT)</div></div>
 <div id="cco" class="abs">144 AQI<br>Unhealthy for Sensitive<br>Groups<br>PM2.5</div>
 <div id="hm" class="abs">Health Message</div>
 <div id="hmt" class="abs">When AQI values are between 101 and 150, members of sensitive groups may experience health effects, but the general public is unlikely to be affected.</div>
</div>
<svg class="abs" style="left:0;top:0" width="744" height="598"><line x1="63" x2="540.5" y1="505.1" y2="505.1" stroke="#e6e6e6" stroke-width="1"/>
<text x="53.5" y="507.8" text-anchor="end" class="yl">100</text>
<line x1="63" x2="540.5" y1="480.8" y2="480.8" stroke="#e6e6e6" stroke-width="1"/>
<text x="53.5" y="483.4" text-anchor="end" class="yl">200</text>
<line x1="63" x2="540.5" y1="456.4" y2="456.4" stroke="#e6e6e6" stroke-width="1"/>
<text x="53.5" y="459.1" text-anchor="end" class="yl">300</text>
<line x1="63" x2="540.5" y1="432.1" y2="432.1" stroke="#e6e6e6" stroke-width="1"/>
<text x="53.5" y="434.7" text-anchor="end" class="yl">400</text>
<line x1="63" x2="540.5" y1="407.8" y2="407.8" stroke="#e6e6e6" stroke-width="1"/>
<text x="53.5" y="410.4" text-anchor="end" class="yl">500</text>
<text x="53.5" y="532.1" text-anchor="end" class="yl">0</text>
<rect x="68.3" y="490.3" width="10.4" height="39.2" fill="#ff0000" stroke="#333" stroke-width="1"/>
<rect x="88.2" y="492.2" width="10.4" height="37.3" fill="#ff0000" stroke="#333" stroke-width="1"/>
<rect x="108.1" y="492.2" width="10.4" height="37.3" fill="#ff0000" stroke="#333" stroke-width="1"/>
<rect x="127.9" y="493.0" width="10.4" height="36.5" fill="#ff0000" stroke="#333" stroke-width="1"/>
<rect x="147.8" y="493.7" width="10.4" height="35.8" fill="#ff7e00" stroke="#333" stroke-width="1"/>
<rect x="167.7" y="497.4" width="10.4" height="32.1" fill="#ff7e00" stroke="#333" stroke-width="1"/>
<rect x="187.6" y="503.0" width="10.4" height="26.5" fill="#ff7e00" stroke="#333" stroke-width="1"/>
<rect x="207.4" y="508.1" width="10.4" height="21.4" fill="#ffff00" stroke="#333" stroke-width="1"/>
<rect x="227.3" y="513.2" width="10.4" height="16.3" fill="#ffff00" stroke="#333" stroke-width="1"/>
<rect x="247.2" y="510.3" width="10.4" height="19.2" fill="#ffff00" stroke="#333" stroke-width="1"/>
<rect x="267.0" y="514.2" width="10.4" height="15.3" fill="#ffff00" stroke="#333" stroke-width="1"/>
<rect x="286.9" y="517.3" width="10.4" height="12.2" fill="#ffff00" stroke="#333" stroke-width="1"/>
<rect x="306.8" y="519.3" width="10.4" height="10.2" fill="#00e400" stroke="#333" stroke-width="1"/>
<rect x="326.6" y="519.3" width="10.4" height="10.2" fill="#00e400" stroke="#333" stroke-width="1"/>
<rect x="346.5" y="518.3" width="10.4" height="11.2" fill="#00e400" stroke="#333" stroke-width="1"/>
<rect x="366.4" y="509.5" width="10.4" height="20.0" fill="#ffff00" stroke="#333" stroke-width="1"/>
<rect x="386.3" y="503.7" width="10.4" height="25.8" fill="#ff7e00" stroke="#333" stroke-width="1"/>
<rect x="406.1" y="499.1" width="10.4" height="30.4" fill="#ff7e00" stroke="#333" stroke-width="1"/>
<rect x="426.0" y="503.7" width="10.4" height="25.8" fill="#ff7e00" stroke="#333" stroke-width="1"/>
<rect x="445.9" y="501.5" width="10.4" height="28.0" fill="#ff7e00" stroke="#333" stroke-width="1"/>
<rect x="465.7" y="496.4" width="10.4" height="33.1" fill="#ff7e00" stroke="#333" stroke-width="1"/>
<rect x="485.6" y="497.6" width="10.4" height="31.9" fill="#ff7e00" stroke="#333" stroke-width="1"/>
<rect x="505.5" y="497.1" width="10.4" height="32.4" fill="#ff7e00" stroke="#333" stroke-width="1"/>
<rect x="525.3" y="494.2" width="10.4" height="35.3" fill="#ff7e00" stroke="#333" stroke-width="1"/>
<line x1="63.6" x2="540.5" y1="530.0" y2="530.0" stroke="#ccd6eb" stroke-width="1"/>
<line x1="63.6" x2="63.6" y1="529.5" y2="535.5" stroke="#ccd6eb" stroke-width="1"/>
<line x1="83.5" x2="83.5" y1="529.5" y2="535.5" stroke="#ccd6eb" stroke-width="1"/>
<line x1="103.3" x2="103.3" y1="529.5" y2="535.5" stroke="#ccd6eb" stroke-width="1"/>
<line x1="123.2" x2="123.2" y1="529.5" y2="535.5" stroke="#ccd6eb" stroke-width="1"/>
<line x1="143.1" x2="143.1" y1="529.5" y2="535.5" stroke="#ccd6eb" stroke-width="1"/>
<line x1="163.0" x2="163.0" y1="529.5" y2="535.5" stroke="#ccd6eb" stroke-width="1"/>
<line x1="182.8" x2="182.8" y1="529.5" y2="535.5" stroke="#ccd6eb" stroke-width="1"/>
<line x1="202.7" x2="202.7" y1="529.5" y2="535.5" stroke="#ccd6eb" stroke-width="1"/>
<line x1="222.6" x2="222.6" y1="529.5" y2="535.5" stroke="#ccd6eb" stroke-width="1"/>
<line x1="242.4" x2="242.4" y1="529.5" y2="535.5" stroke="#ccd6eb" stroke-width="1"/>
<line x1="262.3" x2="262.3" y1="529.5" y2="535.5" stroke="#ccd6eb" stroke-width="1"/>
<line x1="282.2" x2="282.2" y1="529.5" y2="535.5" stroke="#ccd6eb" stroke-width="1"/>
<line x1="302.0" x2="302.0" y1="529.5" y2="535.5" stroke="#ccd6eb" stroke-width="1"/>
<line x1="321.9" x2="321.9" y1="529.5" y2="535.5" stroke="#ccd6eb" stroke-width="1"/>
<line x1="341.8" x2="341.8" y1="529.5" y2="535.5" stroke="#ccd6eb" stroke-width="1"/>
<line x1="361.7" x2="361.7" y1="529.5" y2="535.5" stroke="#ccd6eb" stroke-width="1"/>
<line x1="381.5" x2="381.5" y1="529.5" y2="535.5" stroke="#ccd6eb" stroke-width="1"/>
<line x1="401.4" x2="401.4" y1="529.5" y2="535.5" stroke="#ccd6eb" stroke-width="1"/>
<line x1="421.3" x2="421.3" y1="529.5" y2="535.5" stroke="#ccd6eb" stroke-width="1"/>
<line x1="441.1" x2="441.1" y1="529.5" y2="535.5" stroke="#ccd6eb" stroke-width="1"/>
<line x1="461.0" x2="461.0" y1="529.5" y2="535.5" stroke="#ccd6eb" stroke-width="1"/>
<line x1="480.9" x2="480.9" y1="529.5" y2="535.5" stroke="#ccd6eb" stroke-width="1"/>
<line x1="500.7" x2="500.7" y1="529.5" y2="535.5" stroke="#ccd6eb" stroke-width="1"/>
<line x1="520.6" x2="520.6" y1="529.5" y2="535.5" stroke="#ccd6eb" stroke-width="1"/>
<line x1="540.5" x2="540.5" y1="529.5" y2="535.5" stroke="#ccd6eb" stroke-width="1"/>
<text transform="translate(75.0,538) rotate(-45)" text-anchor="end" class="xl">8 PM</text>
<text transform="translate(94.9,538) rotate(-45)" text-anchor="end" class="xl">9 PM</text>
<text transform="translate(114.8,538) rotate(-45)" text-anchor="end" class="xl">10 PM</text>
<text transform="translate(134.6,538) rotate(-45)" text-anchor="end" class="xl">11 PM</text>
<text transform="translate(154.5,538) rotate(-45)" text-anchor="end" class="xl">Feb 02, 2021 12 AM</text>
<text transform="translate(174.4,538) rotate(-45)" text-anchor="end" class="xl">1 AM</text>
<text transform="translate(194.3,538) rotate(-45)" text-anchor="end" class="xl">2 AM</text>
<text transform="translate(214.1,538) rotate(-45)" text-anchor="end" class="xl">3 AM</text>
<text transform="translate(234.0,538) rotate(-45)" text-anchor="end" class="xl">4 AM</text>
<text transform="translate(253.9,538) rotate(-45)" text-anchor="end" class="xl">5 AM</text>
<text transform="translate(273.7,538) rotate(-45)" text-anchor="end" class="xl">6 AM</text>
<text transform="translate(293.6,538) rotate(-45)" text-anchor="end" class="xl">7 AM</text>
<text transform="translate(313.5,538) rotate(-45)" text-anchor="end" class="xl">8 AM</text>
<text transform="translate(333.3,538) rotate(-45)" text-anchor="end" class="xl">9 AM</text>
<text transform="translate(353.2,538) rotate(-45)" text-anchor="end" class="xl">10 AM</text>
<text transform="translate(373.1,538) rotate(-45)" text-anchor="end" class="xl">11 AM</text>
<text transform="translate(393.0,538) rotate(-45)" text-anchor="end" class="xl">12 PM</text>
<text transform="translate(412.8,538) rotate(-45)" text-anchor="end" class="xl">1 PM</text>
<text transform="translate(432.7,538) rotate(-45)" text-anchor="end" class="xl">2 PM</text>
<text transform="translate(452.6,538) rotate(-45)" text-anchor="end" class="xl">3 PM</text>
<text transform="translate(472.4,538) rotate(-45)" text-anchor="end" class="xl">4 PM</text>
<text transform="translate(492.3,538) rotate(-45)" text-anchor="end" class="xl">5 PM</text>
<text transform="translate(512.2,538) rotate(-45)" text-anchor="end" class="xl">6 PM</text>
<text transform="translate(532.0,538) rotate(-45)" text-anchor="end" class="xl">7 PM</text>
<text transform="translate(32.5,466) rotate(-90)" text-anchor="middle" class="al">AQI</text>
<text x="280" y="382.5" text-anchor="middle" class="ct" letter-spacing="0.4">Bishkek – PM2.5</text></svg>
</body></html>
